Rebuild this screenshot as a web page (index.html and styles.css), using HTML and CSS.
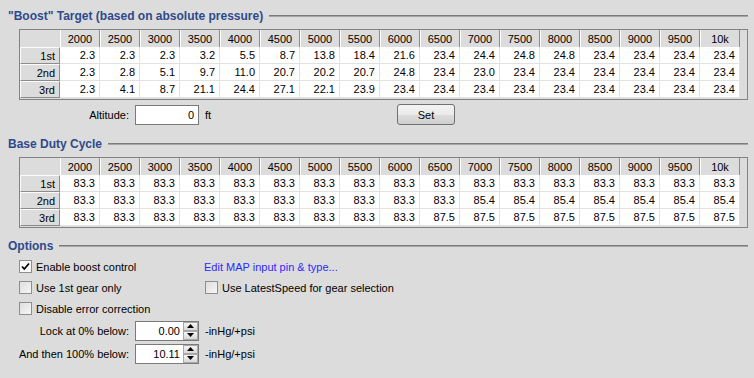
FILE: index.html
```html
<!DOCTYPE html>
<html lang="en">
<head>
    <meta charset="UTF-8">
    <title>Boost Control</title>
    <link rel="stylesheet" href="styles.css">
</head>
<body>
    <div class="section-title">"Boost" Target (based on absolute pressure)</div>
    <div class="grid">
        <table>
            <tr>
                <th class="corner"></th>
                <th>2000</th><th>2500</th><th>3000</th><th>3500</th><th>4000</th><th>4500</th><th>5000</th><th>5500</th><th>6000</th><th>6500</th><th>7000</th><th>7500</th><th>8000</th><th>8500</th><th>9000</th><th>9500</th><th>10k</th>
            </tr>
            <tr>
                <th class="row">1st</th>
                <td>2.3</td><td>2.3</td><td>2.3</td><td>3.2</td><td>5.5</td><td>8.7</td><td>13.8</td><td>18.4</td><td>21.6</td><td>23.4</td><td>24.4</td><td>24.8</td><td>24.8</td><td>23.4</td><td>23.4</td><td>23.4</td><td>23.4</td>
            </tr>
            <tr>
                <th class="row">2nd</th>
                <td>2.3</td><td>2.8</td><td>5.1</td><td>9.7</td><td>11.0</td><td>20.7</td><td>20.2</td><td>20.7</td><td>24.8</td><td>23.4</td><td>23.0</td><td>23.4</td><td>23.4</td><td>23.4</td><td>23.4</td><td>23.4</td><td>23.4</td>
            </tr>
            <tr>
                <th class="row">3rd</th>
                <td>2.3</td><td>4.1</td><td>8.7</td><td>21.1</td><td>24.4</td><td>27.1</td><td>22.1</td><td>23.9</td><td>23.4</td><td>23.4</td><td>23.4</td><td>23.4</td><td>23.4</td><td>23.4</td><td>23.4</td><td>23.4</td><td>23.4</td>
            </tr>
        </table>
    </div>

    <div class="alt-row">
        <label class="field-label">Altitude:</label>
        <div class="textbox">0</div>
        <span class="unit ft">ft</span>
        <button class="btn">Set</button>
    </div>

    <div class="section-title second">Base Duty Cycle</div>
    <div class="grid">
        <table>
            <tr>
                <th class="corner"></th>
                <th>2000</th><th>2500</th><th>3000</th><th>3500</th><th>4000</th><th>4500</th><th>5000</th><th>5500</th><th>6000</th><th>6500</th><th>7000</th><th>7500</th><th>8000</th><th>8500</th><th>9000</th><th>9500</th><th>10k</th>
            </tr>
            <tr>
                <th class="row">1st</th>
                <td>83.3</td><td>83.3</td><td>83.3</td><td>83.3</td><td>83.3</td><td>83.3</td><td>83.3</td><td>83.3</td><td>83.3</td><td>83.3</td><td>83.3</td><td>83.3</td><td>83.3</td><td>83.3</td><td>83.3</td><td>83.3</td><td>83.3</td>
            </tr>
            <tr>
                <th class="row">2nd</th>
                <td>83.3</td><td>83.3</td><td>83.3</td><td>83.3</td><td>83.3</td><td>83.3</td><td>83.3</td><td>83.3</td><td>83.3</td><td>83.3</td><td>85.4</td><td>85.4</td><td>85.4</td><td>85.4</td><td>85.4</td><td>85.4</td><td>85.4</td>
            </tr>
            <tr>
                <th class="row">3rd</th>
                <td>83.3</td><td>83.3</td><td>83.3</td><td>83.3</td><td>83.3</td><td>83.3</td><td>83.3</td><td>83.3</td><td>83.3</td><td>87.5</td><td>87.5</td><td>87.5</td><td>87.5</td><td>87.5</td><td>87.5</td><td>87.5</td><td>87.5</td>
            </tr>
        </table>
    </div>

    <div class="section-title third">Options</div>
    <div class="options">
        <div class="check-row">
            <span class="checkbox checked">
                <svg width="11" height="11" viewBox="0 0 11 11"><path d="M2 5.5 L4.3 8 L9 2.5" fill="none" stroke="#000" stroke-width="1.7"/></svg>
            </span>
            <span>Enable boost control</span>
        </div>
        <div class="check-row right">
            <a class="link" href="#">Edit MAP input pin &amp; type...</a>
        </div>
        <div class="check-row">
            <span class="checkbox"></span>
            <span>Use 1st gear only</span>
        </div>
        <div class="check-row right">
            <span class="checkbox"></span>
            <span>Use LatestSpeed for gear selection</span>
        </div>
        <div class="check-row">
            <span class="checkbox"></span>
            <span>Disable error correction</span>
        </div>
        <div class="check-row right"></div>
    </div>

    <div class="spin-row">
        <label class="field-label">Lock at 0% below:</label>
        <div class="spinner">
            <span class="value">0.00</span>
            <span class="spin-btns">
                <span class="spin-btn"><svg width="7" height="4" viewBox="0 0 7 4"><path d="M0 4 L3.5 0 L7 4 Z" fill="#000"/></svg></span>
                <span class="spin-btn"><svg width="7" height="4" viewBox="0 0 7 4"><path d="M0 0 L3.5 4 L7 0 Z" fill="#000"/></svg></span>
            </span>
        </div>
        <span class="unit">-inHg/+psi</span>
    </div>
    <div class="spin-row">
        <label class="field-label">And then 100% below:</label>
        <div class="spinner">
            <span class="value">10.11</span>
            <span class="spin-btns">
                <span class="spin-btn"><svg width="7" height="4" viewBox="0 0 7 4"><path d="M0 4 L3.5 0 L7 4 Z" fill="#000"/></svg></span>
                <span class="spin-btn"><svg width="7" height="4" viewBox="0 0 7 4"><path d="M0 0 L3.5 4 L7 0 Z" fill="#000"/></svg></span>
            </span>
        </div>
        <span class="unit">-inHg/+psi</span>
    </div>
</body>
</html>
```

FILE: styles.css
```css
body {
    margin: 0;
    padding: 8px 6px 0 0;
    background-color: #dcdcdc;
    color: #000;
    font-family: "Liberation Sans", Arial, sans-serif;
    font-size: 11px;
}
.section-title {
    display: flex;
    align-items: center;
    height: 16px;
    padding-left: 8px;
    font-size: 12px;
    font-weight: bold;
    color: #2e4a8c;
    white-space: nowrap;
}
.section-title::after {
    content: "";
    flex: 1;
    margin-left: 6px;
    border-top: 1px solid #7c7c7c;
    border-bottom: 1px solid #a6a6a6;
}
.section-title.second {
    margin-top: 11px;
}
.section-title.third {
    margin-top: 10px;
}
.grid {
    margin: 5px 0 0 19px;
    height: 69px;
    border: 1px solid #828282;
    background: #dcdcdc;
    overflow: hidden;
}
table {
    border-collapse: separate;
    border-spacing: 0;
    table-layout: fixed;
}
th, td {
    width: 40px;
    min-width: 40px;
    height: 17px;
    padding: 0;
    box-sizing: border-box;
    font-weight: normal;
    white-space: nowrap;
}
th {
    background: #dcdcdc;
    border-left: 1px solid #fff;
    border-right: 1px solid #8c8c8c;
    text-align: center;
}
th.corner {
    border: none;
}
th.row {
    border: 1px solid;
    border-color: #fbfbfb #8c8c8c #8c8c8c #fbfbfb;
    text-align: right;
    padding-right: 4px;
}
td {
    background: #fff;
    border-right: 1px solid #e2e2e2;
    border-bottom: 1px solid #e2e2e2;
    text-align: right;
    padding-right: 4px;
}
.alt-row {
    display: flex;
    align-items: center;
    height: 21px;
    margin-top: 4px;
}
.field-label {
    display: flex;
    justify-content: flex-end;
    flex: none;
    width: 110px;
    margin-left: 19px;
    white-space: nowrap;
}
.textbox {
    width: 64px;
    height: 20px;
    margin-left: 6px;
    box-sizing: border-box;
    border: 1px solid #7a7a7a;
    background: #fff;
    text-align: right;
    padding-right: 4px;
    line-height: 18px;
}
.unit {
    margin-left: 6px;
}
.unit.ft {
    width: 192px;
}
.btn {
    width: 58px;
    height: 21px;
    padding: 0;
    border: 1px solid #707070;
    border-radius: 3px;
    background: linear-gradient(#f3f3f3 0%, #ebebeb 50%, #dddddd 51%, #cfcfcf 100%);
    font-family: inherit;
    font-size: 11px;
    color: #000;
}
.options {
    display: grid;
    grid-template-columns: 185px auto;
    margin: 2px 0 0 19px;
}
.check-row {
    display: flex;
    align-items: center;
    height: 21px;
}
.check-row.right .checkbox {
    margin-left: 1px;
}
.checkbox {
    display: flex;
    align-items: center;
    justify-content: center;
    width: 13px;
    height: 13px;
    margin-right: 4px;
    box-sizing: border-box;
    border: 1px solid #8e8e8e;
    background: linear-gradient(135deg, #dedede, #f6f6f6);
}
.checkbox.checked {
    background: #f8f8f8;
}
.link {
    color: #2a2aff;
    text-decoration: none;
}
.spin-row {
    display: flex;
    align-items: center;
    height: 23px;
}
.spinner {
    display: flex;
    flex: none;
    width: 64px;
    height: 20px;
    margin-left: 6px;
    box-sizing: border-box;
    border: 1px solid #7a7a7a;
    background: #fff;
}
.spinner .value {
    flex: 1;
    text-align: right;
    padding-right: 3px;
    line-height: 18px;
}
.spin-btns {
    display: flex;
    flex-direction: column;
    width: 15px;
}
.spin-btn {
    flex: 1;
    display: flex;
    align-items: center;
    justify-content: center;
    border: 1px solid #a8a8a8;
    background: linear-gradient(#f4f4f4, #d8d8d8);
}
```
